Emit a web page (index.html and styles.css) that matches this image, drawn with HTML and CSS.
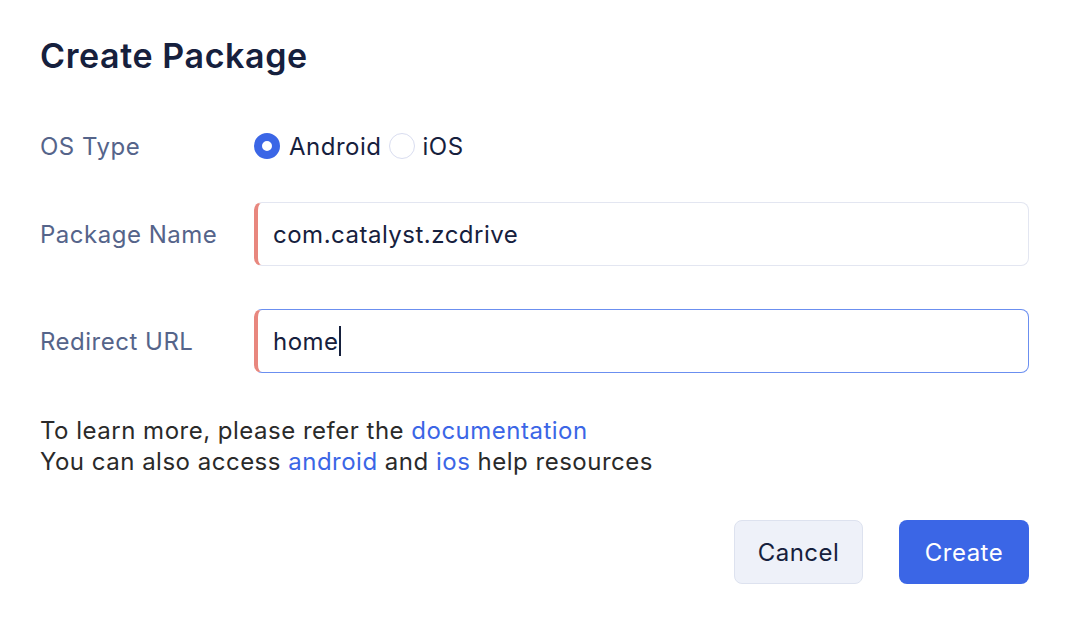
FILE: index.html
```html
<!DOCTYPE html>
<html lang="en">
<head>
    <meta charset="UTF-8">
    <title>Create Package</title>
    <link rel="stylesheet" href="styles.css">
</head>
<body>

    <div class="dialog">
        <h2>Create Package</h2>

        <div class="row">
            <label class="label">OS Type</label>
            <div class="radios">
                <span class="radio checked"></span>
                <span class="radio-text">Android</span>
                <span class="radio"></span>
                <span class="radio-text">iOS</span>
            </div>
        </div>

        <div class="row field">
            <label class="label">Package Name</label>
            <div class="input">com.catalyst.zcdrive</div>
        </div>

        <div class="row field">
            <label class="label">Redirect URL</label>
            <div class="input focused">home<span class="caret"></span></div>
        </div>

        <p class="help">
            To learn more, please refer the <a href="#">documentation</a><br>
            You can also access <a href="#">android</a> and <a href="#">ios</a> help resources
        </p>

        <div class="actions">
            <button class="btn btn-cancel">Cancel</button>
            <button class="btn btn-create">Create</button>
        </div>
    </div>

</body>
</html>
```

FILE: styles.css
```css
body {
    font-family: 'Inter', 'Liberation Sans', sans-serif;
    background-color: #ffffff;
    margin: 0;
    letter-spacing: 0.5px;
}

.dialog {
    width: 989px;
    padding: 34px 0 0 40px;
}

h2 {
    margin: 0 0 53px;
    font-size: 34px;
    font-weight: 600;
    letter-spacing: 0.6px;
    color: #16203d;
    line-height: 44px;
}

.row {
    display: flex;
    align-items: center;
}

.label {
    width: 214px;
    font-size: 24px;
    color: #55648a;
}

.radios {
    display: flex;
    align-items: center;
    font-size: 24px;
    color: #16203d;
    height: 30px;
}

.radio {
    width: 26px;
    height: 26px;
    border-radius: 50%;
    border: 1px solid #d9ddf0;
    box-sizing: border-box;
    margin-right: 7px;
}

.radio.checked {
    border: 8px solid #3b66e6;
    margin-right: 9px;
}

.radio-text {
    margin-right: 8px;
}

.field {
    margin-top: 41px;
}

.field + .field {
    margin-top: 43px;
}

.input {
    flex: 1;
    height: 64px;
    box-sizing: border-box;
    border: 1px solid #e3e6f1;
    border-left: 4px solid #e8877e;
    border-radius: 8px;
    padding: 0 15px;
    display: flex;
    align-items: center;
    font-size: 24px;
    color: #16203d;
}

.input.focused {
    border-color: #6b8ff0;
    border-left-color: #e8877e;
}

.caret {
    display: inline-block;
    width: 2px;
    height: 30px;
    background: #16203d;
}

.help {
    margin: 42px 0 0;
    font-size: 24px;
    line-height: 31px;
    color: #2a2a2a;
}

.help a {
    color: #3b66e6;
    text-decoration: none;
}

.actions {
    display: flex;
    justify-content: flex-end;
    gap: 36px;
    margin-top: 43px;
}

.btn {
    font-family: inherit;
    font-size: 24px;
    letter-spacing: inherit;
    height: 64px;
    border-radius: 8px;
    cursor: pointer;
}

.btn-cancel {
    width: 129px;
    background: #eef1f9;
    border: 1px solid #dde2ef;
    color: #16203d;
}

.btn-create {
    width: 130px;
    background: #3b66e6;
    border: none;
    color: #ffffff;
}
```
